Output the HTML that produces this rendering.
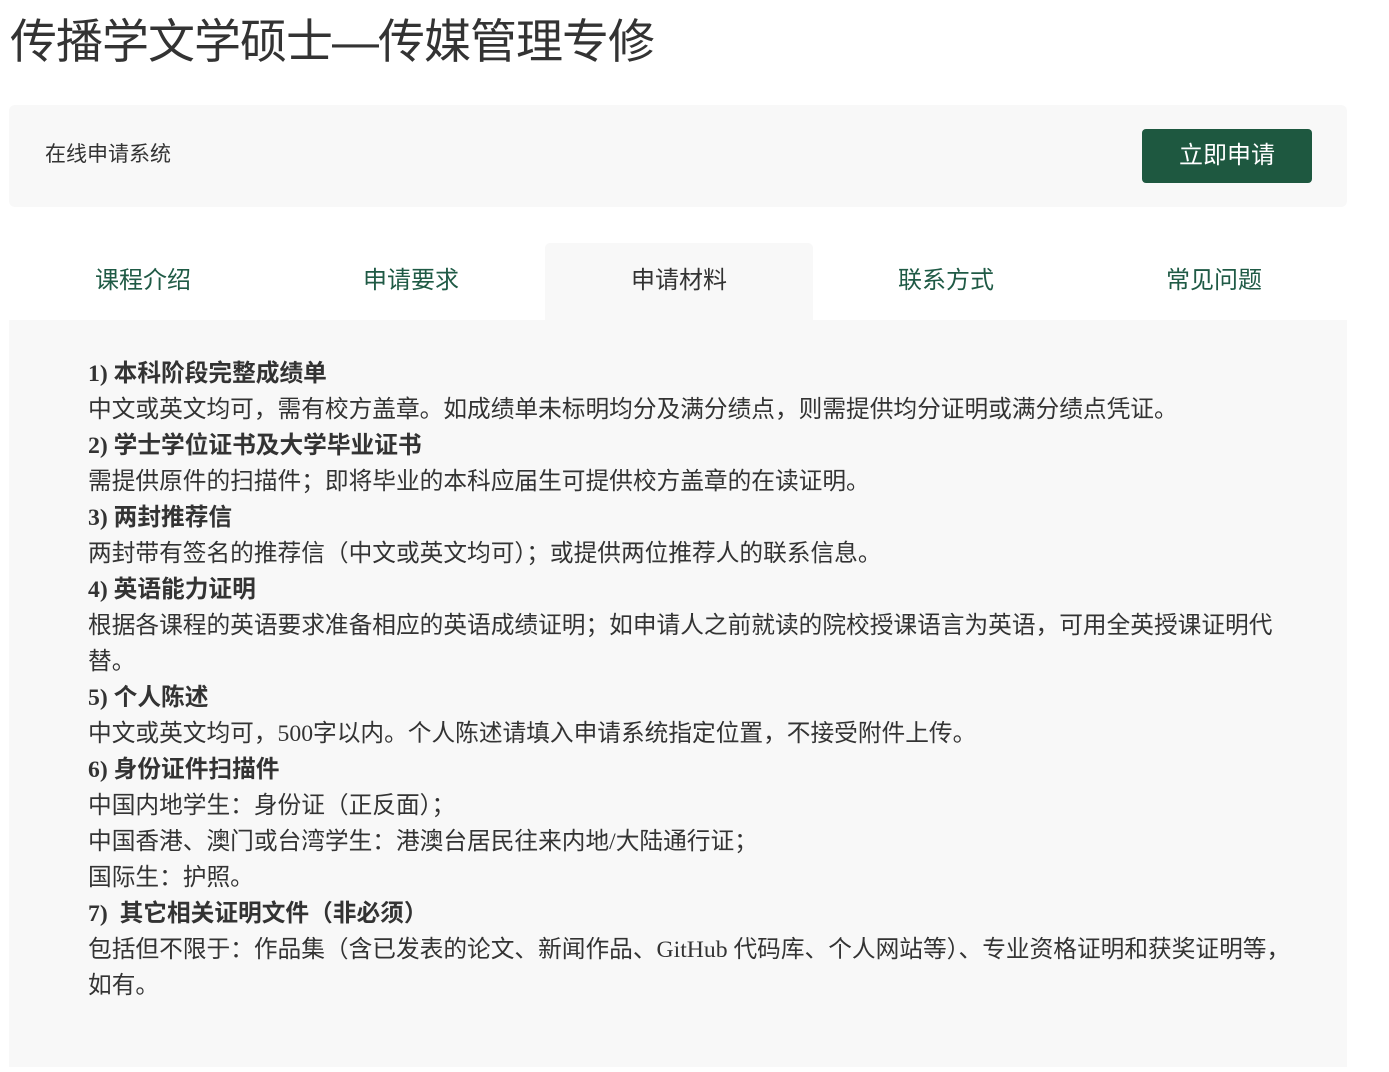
<!DOCTYPE html>
<html><head><meta charset="utf-8"><style>
*{margin:0;padding:0;box-sizing:border-box}
body{width:1389px;height:1072px;background:#fff;font-family:"Liberation Serif","Noto Sans CJK SC",sans-serif;color:#333;overflow:hidden;position:relative}
h1{position:absolute;left:10px;top:12px;font-size:47px;font-weight:normal;font-family:"Liberation Sans","Noto Sans CJK SC",sans-serif;color:#333;line-height:60px;letter-spacing:-1px}
.bar{position:absolute;left:9px;top:105px;width:1338px;height:102px;background:#f8f8f8;border-radius:6px}
.bar span{position:absolute;left:36px;top:36px;font-size:21px;line-height:28px;font-family:"Liberation Sans","Noto Sans CJK SC",sans-serif}
.btn{position:absolute;left:1133px;top:24px;width:170px;height:54px;background:#1e5840;border-radius:4px;color:#fff;font-size:24px;line-height:54px;text-align:center;font-family:"Liberation Sans","Noto Sans CJK SC",sans-serif}
.tab{position:absolute;top:243px;width:268px;height:77px;text-align:center;font-size:24px;line-height:76px;color:#1f5a45;font-family:"Liberation Sans","Noto Sans CJK SC",sans-serif}
.tab.a{background:#f8f8f8;color:#333;border-radius:5px 5px 0 0}
.panel{position:absolute;left:9px;top:320px;width:1338px;height:747px;background:#f8f8f8}
.c{position:absolute;left:88px;top:356px;width:1210px;font-size:23.7px;line-height:36px}
.c b{font-weight:bold;display:block}
</style></head><body>
<h1>传播学文学硕士—传媒管理专修</h1>
<div class="bar"><span>在线申请系统</span><div class="btn">立即申请</div></div>
<div class="tab" style="left:9px">课程介绍</div>
<div class="tab" style="left:277px">申请要求</div>
<div class="tab a" style="left:545px">申请材料</div>
<div class="tab" style="left:812px">联系方式</div>
<div class="tab" style="left:1080px">常见问题</div>
<div class="panel"></div>
<div class="c">
<b>1) 本科阶段完整成绩单</b>
中文或英文均可，需有校方盖章。如成绩单未标明均分及满分绩点，则需提供均分证明或满分绩点凭证。<br>
<b>2) 学士学位证书及大学毕业证书</b>
需提供原件的扫描件；即将毕业的本科应届生可提供校方盖章的在读证明。<br>
<b>3) 两封推荐信</b>
两封带有签名的推荐信（中文或英文均可）；或提供两位推荐人的联系信息。<br>
<b>4) 英语能力证明</b>
根据各课程的英语要求准备相应的英语成绩证明；如申请人之前就读的院校授课语言为英语，可用全英授课证明代替。<br>
<b>5) 个人陈述</b>
中文或英文均可，500字以内。个人陈述请填入申请系统指定位置，不接受附件上传。<br>
<b>6) 身份证件扫描件</b>
中国内地学生：身份证（正反面）；<br>
中国香港、澳门或台湾学生：港澳台居民往来内地/大陆通行证；<br>
国际生：护照。<br>
<b>7) &nbsp;其它相关证明文件（非必须）</b>
包括但不限于：作品集（含已发表的论文、新闻作品、GitHub 代码库、个人网站等）、专业资格证明和获奖证明等，如有。
</div>
</body></html>
